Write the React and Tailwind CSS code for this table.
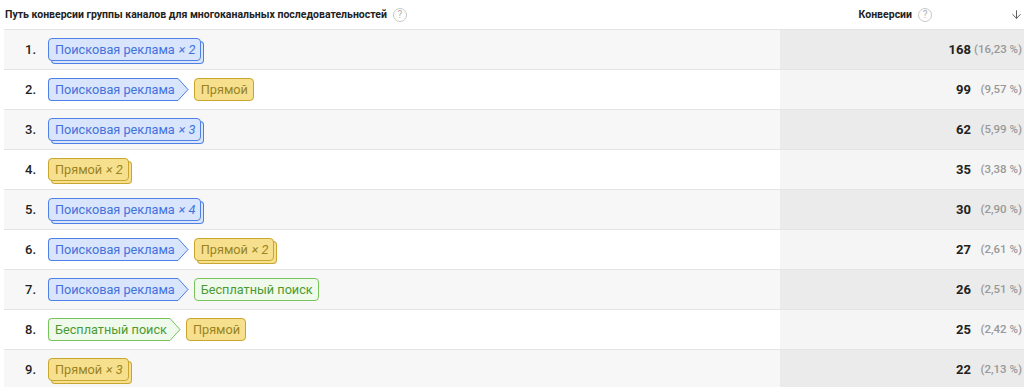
import { ArrowDown } from 'lucide-react';

const rows = [
  { n: 1, path: [{ kind: 'blue', label: 'Поисковая реклама', count: 2 }], value: 168, pct: '16,23 %' },
  { n: 2, path: [{ kind: 'blue', label: 'Поисковая реклама' }, { kind: 'yellow', label: 'Прямой' }], value: 99, pct: '9,57 %' },
  { n: 3, path: [{ kind: 'blue', label: 'Поисковая реклама', count: 3 }], value: 62, pct: '5,99 %' },
  { n: 4, path: [{ kind: 'yellow', label: 'Прямой', count: 2 }], value: 35, pct: '3,38 %' },
  { n: 5, path: [{ kind: 'blue', label: 'Поисковая реклама', count: 4 }], value: 30, pct: '2,90 %' },
  { n: 6, path: [{ kind: 'blue', label: 'Поисковая реклама' }, { kind: 'yellow', label: 'Прямой', count: 2 }], value: 27, pct: '2,61 %' },
  { n: 7, path: [{ kind: 'blue', label: 'Поисковая реклама' }, { kind: 'green', label: 'Бесплатный поиск' }], value: 26, pct: '2,51 %' },
  { n: 8, path: [{ kind: 'green', label: 'Бесплатный поиск' }, { kind: 'yellow', label: 'Прямой' }], value: 25, pct: '2,42 %' },
  { n: 9, path: [{ kind: 'yellow', label: 'Прямой', count: 3 }], value: 22, pct: '2,13 %' },
];

const styles = {
  blue: {
    box: 'bg-[#d9e5fc] border-[#4f80e6] text-[#3f72dc]',
    stack: 'shadow-[3px_3px_0_-1px_#d9e5fc,3px_3px_0_0_#4f80e6]',
    fill: '#d9e5fc',
    stroke: '#4f80e6',
  },
  yellow: {
    box: 'bg-[#f6e08e] border-[#c8a630] text-[#998322]',
    stack: 'shadow-[3px_3px_0_-1px_#f6e08e,3px_3px_0_0_#c8a630]',
    fill: '#f6e08e',
    stroke: '#c8a630',
  },
  green: {
    box: 'bg-[#f0faec] border-[#78c35b] text-[#4a9a32]',
    stack: 'shadow-[3px_3px_0_-1px_#f0faec,3px_3px_0_0_#78c35b]',
    fill: '#f0faec',
    stroke: '#78c35b',
  },
};

function HelpIcon() {
  return (
    <span className="inline-flex h-[14px] w-[14px] items-center justify-center rounded-full border border-[#c8c8c8] text-[10px] font-normal leading-none text-[#b0b0b0]">
      ?
    </span>
  );
}

function Chip({ kind, label, count, arrow }) {
  const s = styles[kind];

  if (arrow) {
    return (
      <div className="flex h-[23px] items-stretch">
        <div className={`flex items-center rounded-l-[4px] border-y border-l pl-[6px] pr-[3px] ${s.box}`}>{label}</div>
        <svg width="11" height="23" viewBox="0 0 11 23" className="block">
          <path d="M0 0 L10.5 11.5 L0 23 Z" fill={s.fill} />
          <path d="M0 0.5 L10 11.5 L0 22.5" fill="none" stroke={s.stroke} strokeWidth="1" />
        </svg>
      </div>
    );
  }

  return (
    <div className={`flex h-[23px] items-center whitespace-nowrap rounded-[4px] border pl-[6px] pr-[5px] ${s.box} ${count ? s.stack : ''}`}>
      {label}
      {count ? <span className="ml-[4px] italic">× {count}</span> : null}
    </div>
  );
}

export default function App() {
  return (
    <div className="bg-white px-[4px] font-['Roboto','Liberation_Sans',sans-serif] text-[#222]">
      <div className="flex h-[29px] items-center text-[10.5px] font-bold">
        <div className="flex flex-1 items-center gap-[6px] pl-[1px]">
          <span>Путь конверсии группы каналов для многоканальных последовательностей</span>
          <HelpIcon />
        </div>
        <div className="flex w-[244px] items-center justify-end pr-[1px]">
          <span>Конверсии</span>
          <span className="ml-[6px]">
            <HelpIcon />
          </span>
          <ArrowDown className="ml-[78px] h-[15px] w-[13px] text-[#555]" strokeWidth={1.75} />
        </div>
      </div>

      <div className="border-t border-[#e4e4e4]">
        {rows.map((row) => {
          const odd = row.n % 2 === 1;
          return (
            <div key={row.n} className="flex h-[40px] border-b border-[#e4e4e4]">
              <div className={`flex flex-1 items-center text-[12.7px] ${odd ? 'bg-[#f7f7f7]' : 'bg-white'}`}>
                <span className="w-[32px] text-right text-[13px] font-medium text-[#222]">{row.n}.</span>
                <div className="ml-[12px] flex items-center gap-[5px]">
                  {row.path.map((chip, i) => (
                    <Chip key={i} {...chip} arrow={i < row.path.length - 1} />
                  ))}
                </div>
              </div>
              <div className={`flex w-[244px] items-center justify-end pr-[2px] ${odd ? 'bg-[#ebebeb]' : 'bg-[#f5f5f5]'}`}>
                <span className="text-[13px] font-bold text-[#222]">{row.value}</span>
                <span className="ml-[3px] w-[48px] whitespace-nowrap text-right text-[11.5px] font-medium text-[#999]">({row.pct})</span>
              </div>
            </div>
          );
        })}
      </div>
    </div>
  );
}
